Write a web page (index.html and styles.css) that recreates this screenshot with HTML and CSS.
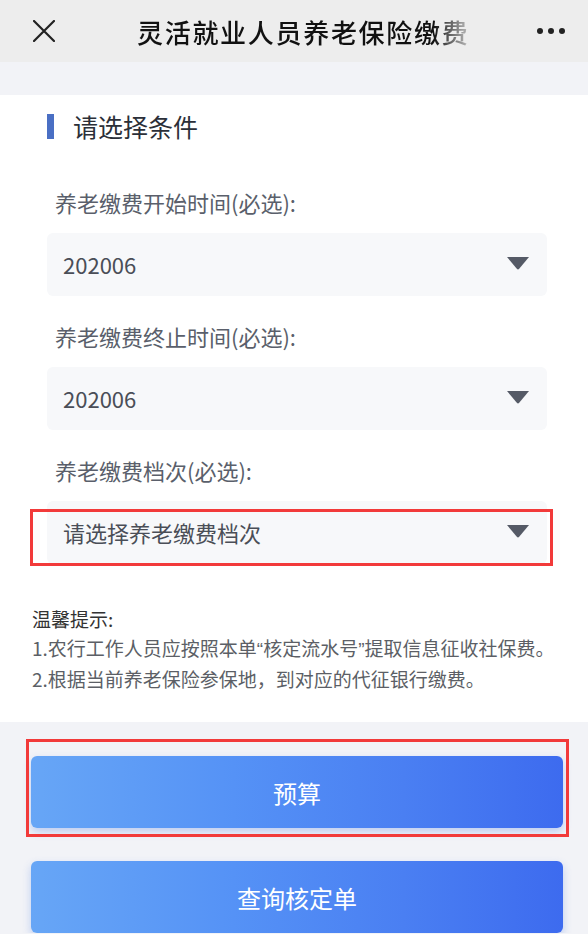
FILE: index.html
```html
<!DOCTYPE html>
<html lang="zh-CN">
<head>
    <meta charset="UTF-8">
    <meta name="viewport" content="width=device-width, initial-scale=1.0">
    <title>灵活就业人员养老保险缴费</title>
    <link rel="stylesheet" href="styles.css">
</head>
<body>
    <!-- Top bar -->
    <header class="topbar">
        <svg class="close-icon" width="22" height="22" viewBox="0 0 22 22">
            <path d="M1 1 L21 21 M21 1 L1 21" stroke="#222" stroke-width="2.2" stroke-linecap="round" fill="none"/>
        </svg>
        <div class="topbar-title">灵活就业人员养老保险缴费</div>
        <svg class="more-icon" width="30" height="8" viewBox="0 0 30 8">
            <circle cx="4" cy="4" r="3" fill="#222"/>
            <circle cx="15" cy="4" r="3" fill="#222"/>
            <circle cx="26" cy="4" r="3" fill="#222"/>
        </svg>
    </header>

    <div class="spacer"></div>

    <section class="panel">
        <h2 class="panel-title">请选择条件</h2>

        <div class="field">
            <label class="field-label">养老缴费开始时间(必选):</label>
            <div class="select">
                <span>202006</span>
                <svg class="arrow" width="22" height="13" viewBox="0 0 22 13"><path d="M0 0 H22 L12.2 11.8 Q11 13 9.8 11.8 Z" fill="#555a66"/></svg>
            </div>
        </div>

        <div class="field">
            <label class="field-label">养老缴费终止时间(必选):</label>
            <div class="select">
                <span>202006</span>
                <svg class="arrow" width="22" height="13" viewBox="0 0 22 13"><path d="M0 0 H22 L12.2 11.8 Q11 13 9.8 11.8 Z" fill="#555a66"/></svg>
            </div>
        </div>

        <div class="field">
            <label class="field-label">养老缴费档次(必选):</label>
            <div class="select marked">
                <span>请选择养老缴费档次</span>
                <svg class="arrow" width="22" height="13" viewBox="0 0 22 13"><path d="M0 0 H22 L12.2 11.8 Q11 13 9.8 11.8 Z" fill="#555a66"/></svg>
            </div>
        </div>

        <div class="tips">
            <p class="tips-title">温馨提示:</p>
            <p>1.农行工作人员应按照本单<span class="quote">“</span>核定流水号<span class="quote">”</span>提取信息征收社保费。</p>
            <p>2.根据当前养老保险参保地，到对应的代征银行缴费。</p>
        </div>
    </section>

    <div class="actions">
        <div class="btn-wrap marked-btn">
            <button class="btn">预算</button>
        </div>
        <button class="btn">查询核定单</button>
    </div>
</body>
</html>
```

FILE: styles.css
```css
/* General */
body {
    margin: 0;
    font-family: "Noto Sans CJK SC", "Noto Sans", sans-serif;
    background: #f2f3f7;
    overflow: hidden;
}

/* Top bar */
.topbar {
    height: 62px;
    background: #ededed;
    display: flex;
    align-items: center;
    padding: 0 22px 0 33px;
}

.close-icon {
    flex-shrink: 0;
}

.topbar-title {
    margin-left: 82px;
    width: 345px;
    font-size: 26px;
    font-weight: 500;
    letter-spacing: 1.7px;
    color: #111;
    white-space: nowrap;
    overflow: hidden;
    -webkit-mask-image: linear-gradient(to right, #000 86%, transparent 99%);
    mask-image: linear-gradient(to right, #000 86%, transparent 99%);
}

.more-icon {
    margin-left: auto;
}

.spacer {
    height: 33px;
}

/* White panel */
.panel {
    background: #fff;
    padding: 19px 41px 29px 47px;
}

.panel-title {
    margin: 0;
    height: 25px;
    line-height: 25px;
    font-size: 25px;
    font-weight: normal;
    color: #2b2f38;
    border-left: 7px solid #4a6fc4;
    padding-left: 19px;
}

.field {
    margin-top: 48px;
}

.field + .field {
    margin-top: 25px;
}

.field-label {
    display: block;
    padding-left: 8px;
    font-size: 22px;
    line-height: 30px;
    color: #5a5f6b;
}

.select {
    position: relative;
    margin-top: 16px;
    height: 63px;
    background: #f7f8fa;
    border-radius: 6px;
    display: flex;
    align-items: center;
    justify-content: space-between;
    padding: 0 18px 0 16px;
    font-size: 22px;
    color: #4a4e57;
}

.select span {
    margin-top: -2px;
}

.arrow {
    margin-top: -3px;
}

/* Annotation outline */
.marked::after {
    content: "";
    position: absolute;
    left: -17px;
    right: -6px;
    top: 8px;
    bottom: -2px;
    border: 3px solid #f23a3a;
}

/* Tips */
.tips {
    margin: 40px -30px 0 -15px;
    font-size: 19px;
    line-height: 29px;
    color: #5c5f66;
    white-space: nowrap;
}

.tips p {
    margin: 0;
}

.tips .quote {
    font-family: "Liberation Sans", sans-serif;
}

.tips-title {
    color: #333;
}

/* Buttons */
.actions {
    padding: 34px 25px 0 31px;
    display: flex;
    flex-direction: column;
    gap: 33px;
}

.btn-wrap {
    position: relative;
}

.marked-btn::after {
    content: "";
    position: absolute;
    left: -5px;
    right: -6px;
    top: -17px;
    bottom: -9px;
    border: 3px solid #f23a3a;
}

.btn {
    width: 100%;
    height: 72px;
    border: none;
    border-radius: 6px;
    background: linear-gradient(to right, #67a6f6, #5592f6 38%, #4a7ff2 70%, #3d6bef);
    box-shadow: 0 4px 8px rgba(70, 120, 230, 0.3);
    color: #fff;
    font-family: inherit;
    font-size: 24px;
    display: block;
}
```
